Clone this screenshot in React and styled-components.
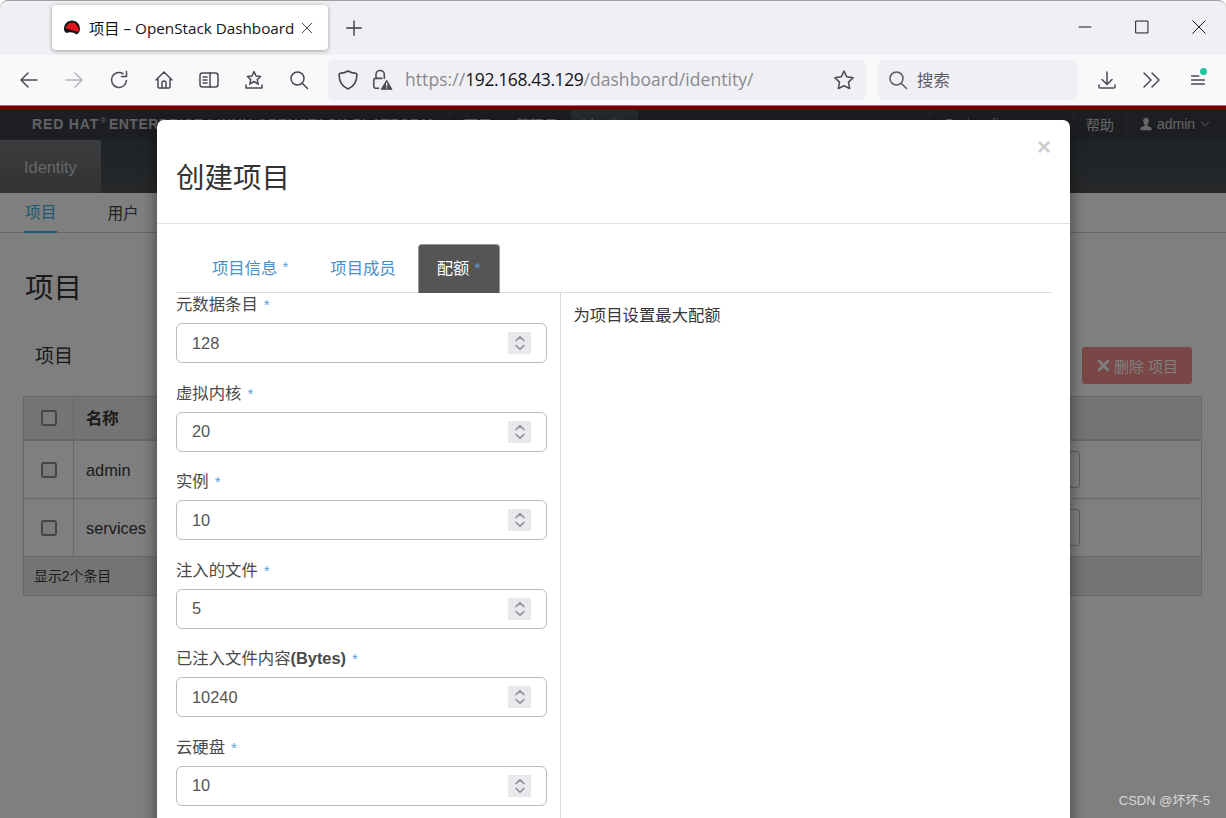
import React from "react";
import styled, { createGlobalStyle } from "styled-components";

const Global = createGlobalStyle`
  html, body { margin: 0; padding: 0; background: #fff; }
  * { box-sizing: border-box; }
  body { font-family: "Liberation Sans", "Noto Sans CJK SC", sans-serif; font-size: 16.38px; color: #363636; }
`;

const CJK = `"Liberation Sans", "Noto Sans CJK SC", sans-serif`;
const UI = `"Open Sans", "Noto Sans CJK SC", sans-serif`;

const Screen = styled.div`position: relative; width: 1226px; height: 818px; overflow: hidden; display: flex; flex-direction: column;`;

/* browser chrome */
const TabStrip = styled.div`height: 55px; flex: none; background: #f0f0f4; border-top: 1px solid #a0a0a0; border-top-left-radius: 8px; border-top-right-radius: 8px; display: flex; align-items: flex-start; padding: 4px 0 0 52px; color: #15141a;`;
const BrowserTab = styled.div`width: 276px; height: 45px; background: #fff; border-radius: 4px; box-shadow: 0 1px 4px rgba(0,0,0,.35); display: flex; align-items: center; padding-left: 11px; font-family: ${UI}; font-size: 15.25px;`;
const TabTitle = styled.span`margin-left: 8px; width: 212px; white-space: nowrap; padding-bottom: 2px;`;
const NewTab = styled.div`margin: 14px 0 0 17px; width: 18px; height: 18px; display: flex; color: #3a3944;`;
const WindowControls = styled.div`margin-left: auto; height: 44px; display: flex; align-items: center; padding-right: 20px; gap: 43px;`;
const Toolbar = styled.div`height: 50px; flex: none; background: #f9f9fb; display: flex; align-items: center; padding-left: 6px; color: #4b4a52;`;
const ToolBtn = styled.div`width: 45px; height: 40px; flex: none; display: flex; align-items: center; justify-content: center; color: ${p => p.$dim ? "#b4b3ba" : "#4b4a52"};`;
const UrlBar = styled.div`margin-left: 7px; width: 538px; height: 40px; border-radius: 5px; background: #f0f0f4; display: flex; align-items: center; padding-left: 8px; font-family: ${UI}; font-size: 17.5px; color: #8a8991;`;
const UrlIcon = styled.div`width: 24px; height: 24px; flex: none; margin-right: ${p => p.$mr || 10}px; display: flex; align-items: center; justify-content: center; color: #4b4a52;`;
const UrlText = styled.div`white-space: nowrap; flex: 1; letter-spacing: .06px; padding: 0 0 2px 2px;`;
const UrlHost = styled.span`color: #15141a; letter-spacing: -.4px;`;
const SearchBar = styled.div`margin-left: 12px; width: 200px; height: 40px; border-radius: 5px; background: #f0f0f4; display: flex; align-items: center; padding-left: 10px; gap: 9px; font-family: ${UI}; font-size: 16.4px; color: #5b5b66;`;
const SearchText = styled.span`padding-bottom: 2px;`;
const RightTools = styled.div`margin-left: 6px; display: flex;`;
const MenuBtn = styled(ToolBtn)`position: relative; margin-left: 1px;`;
const Dot = styled.span`position: absolute; top: 8px; right: 13px; width: 7px; height: 7px; border-radius: 50%; background: #1fc6a2;`;

/* dashboard behind */
const Page = styled.div`flex: 1; min-height: 0; background: #fff;`;
const Masthead = styled.div`height: 34px; background: #383d42; border-top: 4px solid #e90000; border-bottom: 1px solid #444a50; display: flex; align-items: stretch; color: #ccc; font-size: 14px; margin-top: 1px;`;
const Brand = styled.div`width: 417px; margin-left: 32px; padding-bottom: 1px; flex: none; display: flex; align-items: center; font-weight: 700; font-size: 14px; letter-spacing: .85px; color: #c4c4c4; white-space: nowrap;`;
const BrandMark = styled.span`font-size: 8px; font-weight: 400; margin: 0 2px 7px 1px;`;
const BrandRest = styled.span`letter-spacing: .5px;`;
const NavGroup = styled.div`display: flex; align-items: stretch; border-left: 1px solid #4b5056; width: ${p => p.$w ? `${p.$w}px` : "auto"};`;
const NavItem = styled.div`display: flex; align-items: center; padding: 0 ${p => p.$r ?? p.$pad ?? 14}px 2px ${p => p.$pad ?? 14}px; background: ${p => p.$active ? "#50565c" : "none"}; white-space: nowrap;`;
const NavSpacer = styled.div`flex: 1;`;
const SubMast = styled.div`height: 53px; background: linear-gradient(#40464b, #4c5054); display: flex;`;
const SectionTab = styled.div`width: 101px; background: linear-gradient(#787a7d, #636568); color: #cfcfcf; display: flex; align-items: center; padding: 2px 0 0 24px;`;
const SubNav = styled.div`height: 40px; border-bottom: 1px solid #d1d1d1; background: #fff; display: flex; padding-left: 24px; gap: 49px; font-size: 15.7px;`;
const SubItem = styled.div`height: 40px; display: flex; align-items: center; padding: 0 1px 2px; color: ${p => p.$active ? "#39b0e6" : "#444"}; border-bottom: ${p => p.$active ? "2px solid #39b0e6" : "none"};`;
const PageBody = styled.div`padding: 0 23px;`;
const H1 = styled.div`margin: 34px 0 0 2px; height: 42px; font-size: 28.5px; line-height: 42px; color: #333;`;
const PanelHead = styled.div`margin-top: 38px; height: 38px; display: flex; align-items: flex-start; justify-content: space-between; padding: 0 11px 0 12px;`;
const PanelTitle = styled.div`font-size: 19px; line-height: 20px;`;
const DeleteBtn = styled.div`width: 110px; height: 37px; border-radius: 3px; background: #f48c8c; color: #fff; font-size: 15px; display: flex; align-items: center; justify-content: center; gap: 3px;`;
const Table = styled.div`margin-top: 11px; width: 1179px; border: 1px solid #cfcfcf;`;
const Row = styled.div`height: ${p => p.$h}px; display: flex; border-bottom: ${p => p.$thick ? "2px" : "1px"} solid #d2d2d2; background: ${p => p.$head ? "#e8e8e8" : "#fff"}; font-weight: ${p => p.$head ? 700 : 400};`;
const CheckCell = styled.div`width: 50px; flex: none; border-right: 1px solid #d2d2d2; display: flex; align-items: center; justify-content: center;`;
const Check = styled.span`width: 16px; height: 16px; border: 2px solid #8b8b94; border-radius: 3px; background: #f4f4f4;`;
const NameCell = styled.div`flex: 1; display: flex; align-items: center; padding: 2px 12px 0; position: relative;`;
const HeadName = styled(NameCell)`padding: 0 12px 3px;`;
const ActionBtn = styled.span`position: absolute; right: 121px; top: 10px; width: 40px; height: 37px; border: 1px solid #bbb; border-radius: 3px;`;
const TableFoot = styled.div`height: 38px; background: #e8e8e8; display: flex; align-items: center; padding: 0 0 3px 10px; font-size: 13.9px;`;

/* modal */
const Backdrop = styled.div`position: absolute; left: 0; right: 0; top: 105px; bottom: 0; background: rgba(0,0,0,.5);`;
const Modal = styled.div`position: absolute; left: 157px; top: 120px; width: 913px; height: 760px; background: #fff; border-radius: 7px; box-shadow: 0 5px 15px rgba(0,0,0,.5); color: #363636;`;
const ModalHead = styled.div`height: 104px; border-bottom: 1px solid #e2e2e2; padding: 0 19px; position: relative;`;
const ModalTitle = styled.div`padding-top: 38px; font-size: 28.5px; line-height: 40px; color: #333;`;
const Close = styled.div`position: absolute; right: 19px; top: 14px; font-size: 24px; line-height: 26px; font-weight: 700; color: #cdcdcd;`;
const TabsRow = styled.div`margin: 20px 19px 0; height: 49px; border-bottom: 1px solid #dcdcdc; padding-left: 17px; display: flex; gap: 4px;`;
const FormTab = styled.div`height: 49px; padding: 0 19px 4px ${p => p.$active ? 18 : 19}px; margin-left: ${p => p.$active ? -1 : 0}px; border-radius: 4px 4px 0 0; display: flex; align-items: center; gap: 5px; white-space: nowrap; color: ${p => p.$active ? "#fff" : "#4a90c8"}; background: ${p => p.$active ? "#555" : "none"}; border: ${p => p.$active ? "1px solid #999" : "none"}; border-bottom: none;`;
const Star = styled.span`color: #5aa0dc; font-size: 15px;`;
const Columns = styled.div`margin: 0 19px; display: flex;`;
const FormCol = styled.div`width: 384.5px; flex: none; padding-right: 13.5px; border-right: 1px solid #d9d9d9; height: 540px;`;
const HelpCol = styled.div`padding: 12px 0 0 13px; line-height: 20px;`;
const FormGroup = styled.div`height: 88.6px;`;
const Label = styled.div`height: 30px; line-height: 23.5px; display: flex; gap: 6px; align-items: flex-start; color: #4a4a4a;`;
const LabelB = styled.b`font-weight: 700;`;
const Field = styled.div`width: 371px; height: 40px; border: 1px solid #bbb; border-radius: 6px; display: flex; align-items: center; padding: 0 15px; background: #fff;`;
const Value = styled.span`flex: 1; color: #555;`;
const Spin = styled.span`width: 23px; height: 22px; background: #e9e9ed; display: flex; align-items: center; justify-content: center;`;
const Watermark = styled.div`position: absolute; right: 16px; bottom: 9px; color: #d8d8d8; font-size: 13px; font-family: ${CJK};`;

const Svg = ({ s = 20, children, sw = 1.5 }) => (
  <svg width={s} height={s} viewBox="0 0 20 20" fill="none" stroke="currentColor" strokeWidth={sw} strokeLinecap="round" strokeLinejoin="round">{children}</svg>
);

const Favicon = () => (
  <svg width="18" height="18" viewBox="0 0 18 18">
    <path d="M1 10 C1 5 4.500 1.500 9 1.500 C13.500 1.500 17 5 17 10 C17 13 15 15 13.500 15.500 C11 13 6 12.500 3.500 14 C2 13 1 12 1 10Z" fill="#141414" />
    <path d="M2.500 9 C3.500 7 5 4 9 3.500 C12 3.500 14 6 16 10 C16.500 12 15 13 13 12.500 C9 10.500 6 11 2.500 9Z" fill="#e0141c" />
  </svg>
);

const fields = [
  ["元数据条目", "128"],
  ["虚拟内核", "20"],
  ["实例", "10"],
  ["注入的文件", "5"],
  [<span key="b">已注入文件内容<LabelB>(Bytes)</LabelB></span>, "10240"],
  ["云硬盘", "10"],
];

export default function App() {
  return (
    <Screen>
      <Global />
      <TabStrip>
        <BrowserTab>
          <Favicon />
          <TabTitle>项目 – OpenStack Dashboard</TabTitle>
          <Svg s={12} sw={1.3}><path d="M2 2 18 18M18 2 2 18" /></Svg>
        </BrowserTab>
        <NewTab><Svg s={18}><path d="M10 2v16M2 10h16" /></Svg></NewTab>
        <WindowControls>
          <Svg s={14} sw={1.4}><path d="M1 10h18" strokeLinecap="butt" /></Svg>
          <Svg s={14} sw={1.4}><rect x="1.5" y="1.5" width="17" height="17" /></Svg>
          <Svg s={14} sw={1.4}><path d="M1 1 19 19M19 1 1 19" /></Svg>
        </WindowControls>
      </TabStrip>
      <Toolbar>
        <ToolBtn><Svg s={20}><path d="M18 10H2M9 3 2 10l7 7" /></Svg></ToolBtn>
        <ToolBtn $dim><Svg s={20}><path d="M2 10h16M11 3l7 7-7 7" /></Svg></ToolBtn>
        <ToolBtn><Svg s={20}><path d="M17.5 10.5A7.5 7.5 0 1 1 14 3.6" /><path d="M17.5 1.5V6.5H12.5" /></Svg></ToolBtn>
        <ToolBtn><Svg s={20}><path d="M2 10 10 2l8 8M4 9v8a1 1 0 0 0 1 1h10a1 1 0 0 0 1-1V9" /><path d="M8 18v-5a2 2 0 0 1 4 0v5" /></Svg></ToolBtn>
        <ToolBtn><Svg s={20}><rect x="1" y="3" width="18" height="14" rx="2.5" /><path d="M11 3v14M4 7h4M4 10h4M4 13h4" /></Svg></ToolBtn>
        <ToolBtn><Svg s={20}><path d="M10 1.5l2 4.5 4.6.5-3.4 3.1 1 4.6L10 11.5l-4.2 2.7 1-4.6L3.4 6.5 8 6z" /><path d="M2 15v3h16v-3" /></Svg></ToolBtn>
        <ToolBtn><Svg s={20}><circle cx="8.5" cy="8.5" r="6.5" /><path d="M13.5 13.5 18.5 18.5" /></Svg></ToolBtn>
        <UrlBar>
          <UrlIcon><Svg s={22}><path d="M10 1.800C7.500 3.300 5 3.800 2.800 4c-.8 0-.9.500-.9 1.200 0 6 2.500 10.500 8.100 13 5.600-2.500 8.100-7 8.100-13 0-.7-.1-1.200-.9-1.200-2.200-.2-4.700-.7-7.200-2.200z" /></Svg></UrlIcon>
          <UrlIcon $mr={9}>
            <svg width="24" height="24" viewBox="0 0 22 22" fill="none" stroke="currentColor" strokeWidth="1.4" strokeLinecap="round">
              <path d="M5.500 9V6a3.800 3.800 0 0 1 7.600 0v3.500M11 9.500H5A1.500 1.500 0 0 0 3.500 11v6A1.500 1.500 0 0 0 5 18.500h3" />
              <path d="M15.300 11.500 20 19.500H10.500z" fill="currentColor" strokeLinejoin="round" strokeWidth="1" />
              <path d="M15.300 14v2.500M15.300 18.200v.1" stroke="#f0f0f4" strokeWidth="1.200" />
            </svg>
          </UrlIcon>
          <UrlText>https://<UrlHost>192.168.43.129</UrlHost>/dashboard/identity/</UrlText>
          <ToolBtn><Svg s={22} sw={1.4}><path d="M10 1.800l2.500 5.300 5.800.8-4.200 4 1 5.800L10 15.200l-5.100 2.500 1-5.800-4.200-4 5.800-.8z" /></Svg></ToolBtn>
        </UrlBar>
        <SearchBar>
          <Svg s={20}><circle cx="8.500" cy="8.500" r="6.500" /><path d="M13.500 13.500 18.500 18.500" /></Svg>
          <SearchText>搜索</SearchText>
        </SearchBar>
        <RightTools>
          <ToolBtn><Svg s={20}><path d="M10 2v12M5 9.500l5 5 5-5M2 15v2a1 1 0 0 0 1 1h14a1 1 0 0 0 1-1v-2" /></Svg></ToolBtn>
          <ToolBtn><Svg s={20}><path d="M2 3l7 7-7 7M10 3l7 7-7 7" /></Svg></ToolBtn>
          <MenuBtn><Svg s={16} sw={1.7}><path d="M2 5h9M2 10h16M2 15h16" /></Svg><Dot /></MenuBtn>
        </RightTools>
      </Toolbar>

      <Page>
        <Masthead>
          <Brand>RED HAT<BrandMark>®</BrandMark><BrandRest>ENTERPRISE LINUX OPENSTACK PLATFORM</BrandRest></Brand>
          <NavGroup>
            <NavItem $pad={14} $r={24}>项目</NavItem>
            <NavItem $pad={0} $r={13}>管理员</NavItem>
            <NavItem $active $pad={11}>Identity</NavItem>
          </NavGroup>
          <NavSpacer />
          <NavGroup $w={144}><NavItem $pad={15}>Project list</NavItem></NavGroup>
          <NavGroup><NavItem $pad={12}>帮助</NavItem></NavGroup>
          <NavGroup>
            <NavItem $pad={12} $r={15}>
              <Svg s={14} sw={0}><path d="M10 1c3 0 4.500 2.500 4 5.500-.3 2-1.200 3.500-2 4.500v1.500l6 3V19H2v-3.500l6-3V11c-.8-1-1.700-2.500-2-4.500C5.500 3.500 7 1 10 1z" fill="currentColor" /></Svg>
              &nbsp;admin&nbsp;
              <Svg s={12}><path d="M4 7l6 6 6-6" /></Svg>
            </NavItem>
          </NavGroup>
        </Masthead>
        <SubMast><SectionTab>Identity</SectionTab></SubMast>
        <SubNav>
          <SubItem $active>项目</SubItem>
          <SubItem>用户</SubItem>
        </SubNav>
        <PageBody>
          <H1>项目</H1>
          <PanelHead>
            <PanelTitle>项目</PanelTitle>
            <DeleteBtn>
              <Svg s={15} sw={3.500}><path d="M4 4l12 12M16 4 4 16" /></Svg>
              删除 项目
            </DeleteBtn>
          </PanelHead>
          <Table>
            <Row $h={44} $head $thick><CheckCell><Check /></CheckCell><HeadName>名称</HeadName></Row>
            <Row $h={58}><CheckCell><Check /></CheckCell><NameCell>admin<ActionBtn /></NameCell></Row>
            <Row $h={58}><CheckCell><Check /></CheckCell><NameCell>services<ActionBtn /></NameCell></Row>
            <TableFoot>显示2个条目</TableFoot>
          </Table>
        </PageBody>
      </Page>

      <Backdrop />
      <Modal>
        <ModalHead>
          <ModalTitle>创建项目</ModalTitle>
          <Close>×</Close>
        </ModalHead>
        <TabsRow>
          <FormTab>项目信息<Star>*</Star></FormTab>
          <FormTab>项目成员</FormTab>
          <FormTab $active>配额<Star>*</Star></FormTab>
        </TabsRow>
        <Columns>
          <FormCol>
            {fields.map(([label, value], i) => (
              <FormGroup key={i}>
                <Label>{label}<Star>*</Star></Label>
                <Field>
                  <Value>{value}</Value>
                  <Spin>
                    <svg width="14" height="18" viewBox="0 0 14 18" fill="none" stroke="#8f8f9d" strokeWidth="1.700" strokeLinecap="round" strokeLinejoin="round">
                      <path d="M3 6.500 7 2.800l4 3.700M3 11.500l4 3.700 4-3.700" />
                    </svg>
                  </Spin>
                </Field>
              </FormGroup>
            ))}
          </FormCol>
          <HelpCol>为项目设置最大配额</HelpCol>
        </Columns>
      </Modal>
      <Watermark>CSDN @坏坏-5</Watermark>
    </Screen>
  );
}
